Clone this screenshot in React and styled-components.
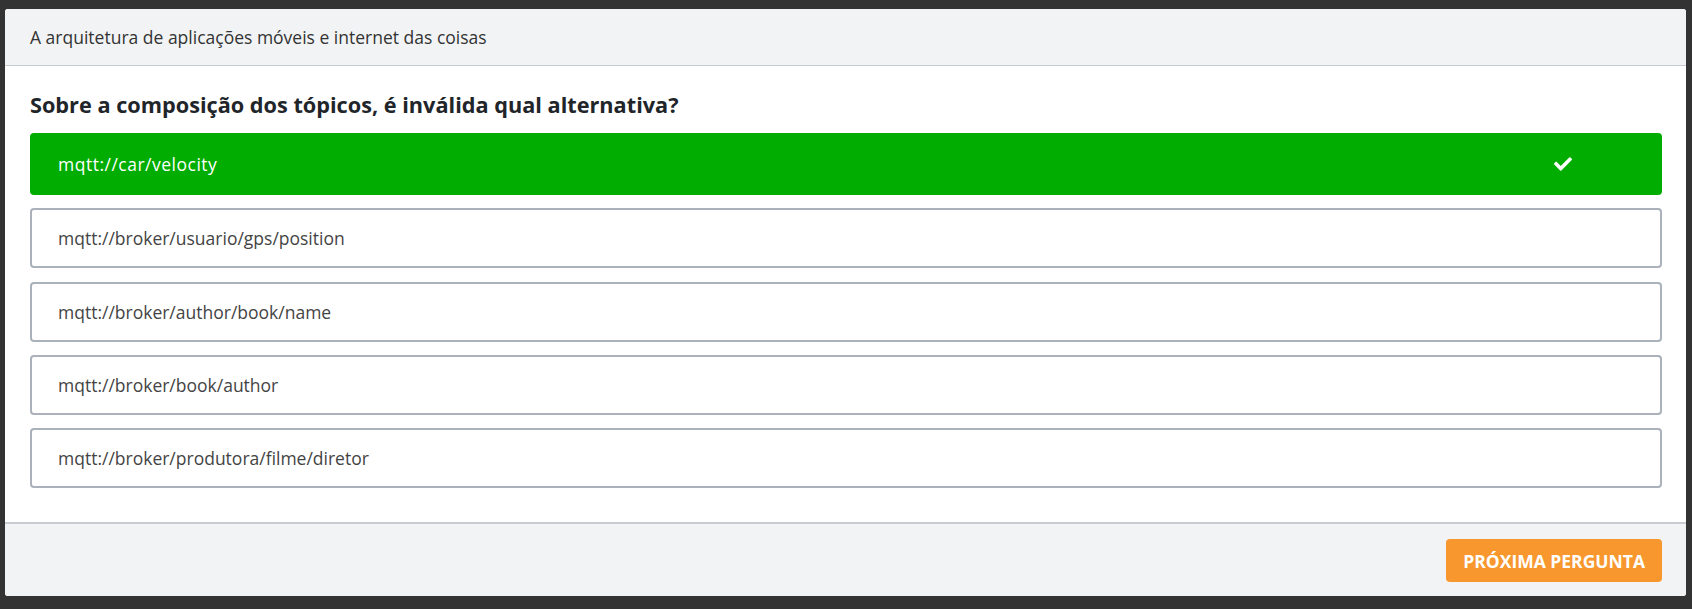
import styled, { createGlobalStyle } from 'styled-components';
import { FaCheck } from 'react-icons/fa';

const GlobalStyle = createGlobalStyle`
  html, body {
    margin: 0;
    padding: 0;
    background-color: #333333;
  }
  body {
    font-family: 'Open Sans', 'Noto Sans', sans-serif;
  }
`;

const Page = styled.div`
  padding: 9px 6px 13px 5px;
`;

const Card = styled.div`
  background-color: #ffffff;
  border-radius: 3px;
  overflow: hidden;
  display: flex;
  flex-direction: column;
`;

const Header = styled.div`
  background-color: #f2f3f5;
  border-bottom: 1px solid #c8ccd1;
  height: 56px;
  display: flex;
  align-items: center;
  padding: 0 25px;
  font-size: 17.5px;
  color: #333333;
`;

const Body = styled.div`
  padding: 22px 24px 34px 25px;
`;

const Question = styled.h2`
  margin: 0 0 12px;
  font-size: 21.7px;
  font-weight: 700;
  line-height: 33px;
  color: #212529;
`;

const OptionList = styled.ul`
  list-style: none;
  margin: 0;
  padding: 0;
  display: flex;
  flex-direction: column;
  gap: 13.3px;
`;

const Option = styled.li`
  height: ${(props) => (props.$correct ? '62px' : '60px')};
  box-sizing: border-box;
  display: flex;
  align-items: center;
  justify-content: space-between;
  padding: 0 88px 0 26px;
  border-radius: 4px;
  font-size: 17.5px;
  border: 2px solid ${(props) => (props.$correct ? '#00ad00' : '#aab1ba')};
  background-color: ${(props) => (props.$correct ? '#00ad00' : '#ffffff')};
  color: ${(props) => (props.$correct ? '#ffffff' : '#444444')};
  font-weight: ${(props) => (props.$correct ? 500 : 400)};
  letter-spacing: ${(props) => (props.$correct ? '0.5px' : 'normal')};
`;

const CheckIcon = styled(FaCheck)`
  width: 18px;
  height: 18px;
  color: #ffffff;
`;

const Footer = styled.div`
  background-color: #f2f3f5;
  border-top: 2px solid #c8ccd1;
  height: 72px;
  display: flex;
  align-items: center;
  justify-content: flex-end;
  padding: 0 24px 0 25px;
`;

const NextButton = styled.button`
  height: 43px;
  padding: 0 17px;
  border: none;
  border-radius: 4px;
  background-color: #f8972d;
  color: #ffffff;
  font-family: 'Open Sans', 'Noto Sans', sans-serif;
  font-size: 17.5px;
  font-weight: 700;
  text-transform: uppercase;
  cursor: pointer;
  margin-top: 1px;
`;

const options = [
  { text: 'mqtt://car/velocity', correct: true },
  { text: 'mqtt://broker/usuario/gps/position' },
  { text: 'mqtt://broker/author/book/name' },
  { text: 'mqtt://broker/book/author' },
  { text: 'mqtt://broker/produtora/filme/diretor' },
];

function App() {
  return (
    <Page>
      <GlobalStyle />
      <Card>
        <Header>A arquitetura de aplicações móveis e internet das coisas</Header>
        <Body>
          <Question>Sobre a composição dos tópicos, é inválida qual alternativa?</Question>
          <OptionList>
            {options.map((opt) => (
              <Option key={opt.text} $correct={opt.correct}>
                <span>{opt.text}</span>
                {opt.correct && <CheckIcon />}
              </Option>
            ))}
          </OptionList>
        </Body>
        <Footer>
          <NextButton>Próxima pergunta</NextButton>
        </Footer>
      </Card>
    </Page>
  );
}

export default App;
